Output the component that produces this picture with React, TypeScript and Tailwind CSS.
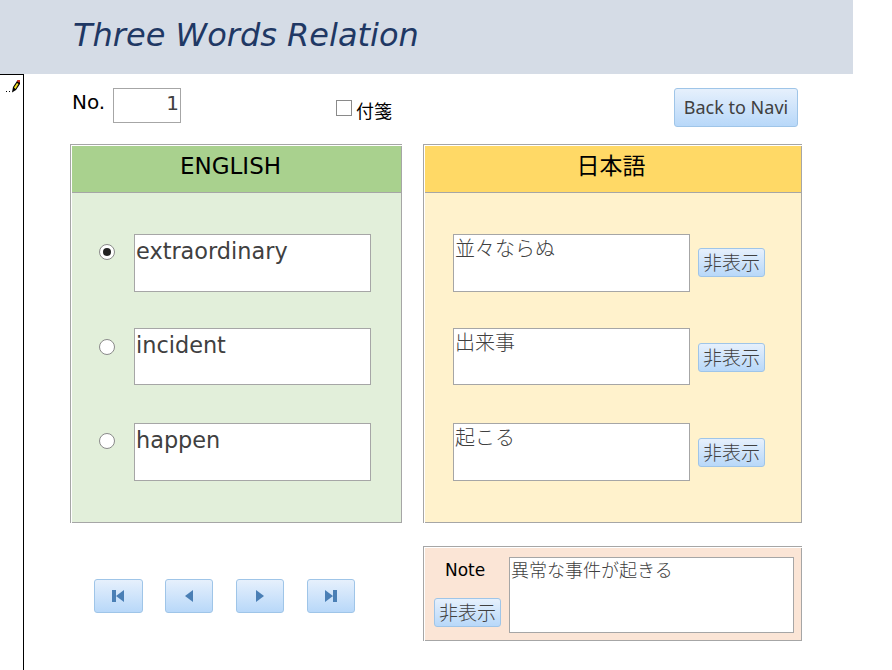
const font = { fontFamily: '"DejaVu Sans","Noto Sans CJK JP",sans-serif' };

function GradBtn({ className, children }: { className: string; children: React.ReactNode }) {
  return (
    <button className={"flex items-center justify-center rounded-[3px] border border-[#9fc5e8] bg-gradient-to-b from-[#e6f0fc] to-[#b8d8f9] text-[#404040] " + className}>
      {children}
    </button>
  );
}

function HideBtn({ className = "" }: { className?: string }) {
  return <GradBtn className={"h-[29px] w-[67px] pb-[2px] text-[19px] leading-none font-light font-['Noto_Sans_CJK_JP'] " + className}>非表示</GradBtn>;
}

function Field({ text, className = "" }: { text: string; className?: string }) {
  return (
    <div className={"border border-[#a6a6a6] bg-white text-[#404040] " + className}>{text}</div>
  );
}

function Panel({ className, head, headBg, children, headClass }: { className: string; head: string; headBg: string; children: React.ReactNode; headClass: string }) {
  return (
    <div className={"h-[379px] border-l border-t border-[#a6a6a6] pl-px pt-px " + className}>
      <div className={"flex h-[47px] items-center justify-center border-b border-r border-[#a6a6a6] text-black " + headBg + " " + headClass}>{head}</div>
      {children}
    </div>
  );
}

function RadioRow({ text, on, rowClass, dotClass, boxClass }: { text: string; on?: boolean; rowClass: string; dotClass: string; boxClass: string }) {
  return (
    <div className={"flex items-start " + rowClass}>
      <div className={"ml-[27px] mr-[19px] flex h-[16px] w-[16px] items-center justify-center rounded-full border border-[#8a8a8a] bg-white " + dotClass}>
        {on && <div className="h-[8px] w-[8px] rounded-full bg-[#222]" />}
      </div>
      <Field text={text} className={"w-[237px] pl-px text-[22.4px] leading-[33px] " + boxClass} />
    </div>
  );
}

function JpRow({ text, rowClass, btnClass, boxClass }: { text: string; rowClass: string; btnClass: string; boxClass: string }) {
  return (
    <div className={"flex items-start " + rowClass}>
      <Field text={text} className={"ml-[28px] w-[237px] pl-px font-light text-[20px] leading-[26px] font-['Noto_Sans_CJK_JP'] " + boxClass} />
      <HideBtn className={"ml-[8px] " + btnClass} />
    </div>
  );
}

function Tri({ d }: { d: string }) {
  return (
    <svg width="12" height="12" viewBox="0 0 12 12" fill="#4a7fb5">
      <path d={d} />
    </svg>
  );
}

export default function App() {
  return (
    <div className="h-[670px] w-[892px] overflow-hidden bg-white" style={font}>
      <div className="flex h-[74px] w-[853px] items-center bg-[#d5dce6] pb-[5px] pl-[73px] text-[32px] italic text-[#1f3864]">
        Three Words Relation
      </div>
      <div className="flex">
        <div className="relative h-[596px] w-[24px] shrink-0 border-r border-t border-black">
          <svg className="absolute left-[5px] top-[3px]" width="16" height="16" viewBox="0 0 16 16">
            <rect x="1" y="13" width="1" height="1" fill="#000" />
            <rect x="4" y="13" width="1" height="1" fill="#000" />
            <path d="M7 14.5 L8 9 L12 3 L15 3 L15 6 L11 12 Z" fill="#000" />
            <path d="M9 9.5 L12 5 L13.5 6 L10.5 11 Z" fill="#f5e020" />
            <path d="M12 2 L15 2 L15 4.5 L12.5 4 Z" fill="#c8321e" />
          </svg>
        </div>
        <div className="w-[868px]">
          <div className="relative h-[70px]">
            <span className="absolute left-[48px] top-[15px] text-[20px] leading-[26px] text-black">No.</span>
            <div className="absolute left-[89px] top-[14px] h-[35px] w-[68px] border border-[#a6a6a6] pr-[1px] text-right text-[20px] leading-[29px] text-[#404040]">1</div>
            <div className="absolute left-[312px] top-[26px] h-[16px] w-[16px] border border-[#8a8a8a]" />
            <span className="absolute left-[332px] top-[24px] font-['Noto_Sans_CJK_JP'] text-[18px] leading-[24px] text-black">付箋</span>
            <GradBtn className="absolute left-[650px] top-[14px] h-[39px] w-[124px] pb-px font-['Noto_Sans'] text-[18px] leading-none">Back to Navi</GradBtn>
          </div>
          <div className="flex">
            <Panel className="ml-[46px] w-[332px]" head="ENGLISH" headBg="bg-[#a9d18e]" headClass="pb-[6px] pr-[12px] text-[23px]">
              <div className="flex h-[330px] flex-col border-b border-r border-[#a6a6a6] bg-[#e2efda] pt-[41px]">
                <RadioRow text="extraordinary" on rowClass="" dotClass="mt-[10px]" boxClass="h-[58px]" />
                <RadioRow text="incident" rowClass="mt-[36px]" dotClass="mt-[11px]" boxClass="h-[57px]" />
                <RadioRow text="happen" rowClass="mt-[38px]" dotClass="mt-[10px]" boxClass="h-[58px]" />
              </div>
            </Panel>
            <Panel className="ml-[21px] w-[379px]" head="日本語" headBg="bg-[#ffd966]" headClass="pb-[10px] pr-[4px] text-[23px] font-['Noto_Sans_CJK_JP']">
              <div className="flex h-[330px] flex-col border-b border-r border-[#a6a6a6] bg-[#fff2cc] pt-[41px]">
                <JpRow text="並々ならぬ" rowClass="" btnClass="mt-[14px]" boxClass="h-[58px]" />
                <JpRow text="出来事" rowClass="mt-[36px]" btnClass="mt-[15px]" boxClass="h-[57px]" />
                <JpRow text="起こる" rowClass="mt-[38px]" btnClass="mt-[15px]" boxClass="h-[58px]" />
              </div>
            </Panel>
          </div>
          <div className="flex">
            <div className="ml-[70px] mt-[56px] flex h-[34px] gap-[23px]">
              <GradBtn className="-mr-px h-[34px] w-[49px] pr-px"><Tri d="M0 0h4v12H0z M12 0v12L4 6z" /></GradBtn>
              <GradBtn className="h-[34px] w-[48px]"><Tri d="M10 0v12L2 6z" /></GradBtn>
              <GradBtn className="h-[34px] w-[48px]"><Tri d="M2 0v12l8-6z" /></GradBtn>
              <GradBtn className="h-[34px] w-[48px]"><Tri d="M0 0v12l8-6z M8 0h4v12H8z" /></GradBtn>
            </div>
            <div className="ml-[68px] mt-[23px] h-[95px] w-[379px] border-l border-t border-[#a6a6a6] pl-px pt-px">
              <div className="flex h-full border-b border-r border-[#a6a6a6] bg-[#fbe5d6]">
                <div className="relative w-[84px] shrink-0">
                  <span className="absolute left-[20px] top-[10px] text-[17px] leading-[24px] text-black">Note</span>
                  <HideBtn className="absolute left-[9px] top-[50px]" />
                </div>
                <Field text="異常な事件が起きる" className="mt-[9px] h-[76px] w-[285px] pl-px font-light font-['Noto_Sans_CJK_JP'] text-[18px] leading-[22px]" />
              </div>
            </div>
          </div>
        </div>
      </div>
    </div>
  );
}
